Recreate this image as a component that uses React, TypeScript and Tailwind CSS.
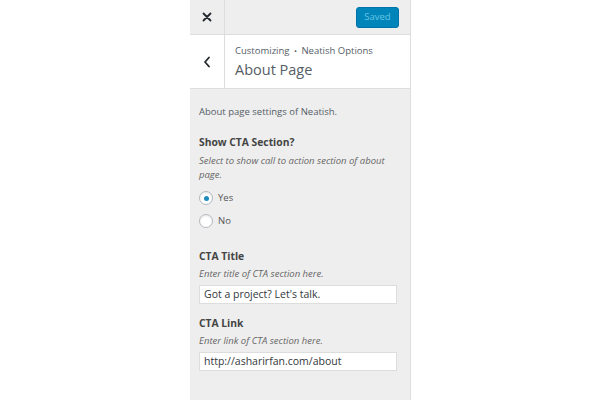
import React from "react";

export default function App() {
  return (
    <div className="w-[600px] h-[400px] bg-white flex pl-[190px] overflow-hidden" style={{ fontFamily: '"Open Sans", sans-serif' }}>
      <div className="w-[221px] h-full bg-[#eeeeee] border-r border-[#dddddd] flex flex-col text-[#555d66]">
        {/* top bar */}
        <div className="h-[35px] flex items-stretch border-b border-[#dddddd] shrink-0">
          <div className="w-[35px] border-r border-[#dddddd] flex items-center justify-center">
            <svg width="10" height="10" viewBox="0 0 10 10">
              <path d="M1.5 1.5 L8.5 8.5 M8.5 1.5 L1.5 8.5" stroke="#23282d" strokeWidth="1.8" strokeLinecap="round" />
            </svg>
          </div>
          <div className="flex-1 flex items-start justify-end pr-[11px] pt-[7px]">
            <div className="h-[21px] w-[43px] rounded-[3px] bg-[#0085ba] border border-[#0073aa] text-[9.5px] text-[#66c6e4] flex items-center justify-center">Saved</div>
          </div>
        </div>
        {/* section header */}
        <div className="h-[54px] bg-white flex items-stretch border-b border-[#dddddd] shrink-0">
          <div className="w-[35px] border-r border-[#dddddd] flex items-center justify-center">
            <svg width="8" height="12" viewBox="0 0 8 12">
              <path d="M6 1.5 L2 6 L6 10.5" fill="none" stroke="#23282d" strokeWidth="1.8" strokeLinecap="round" strokeLinejoin="round" />
            </svg>
          </div>
          <div className="flex-1 pl-[10px] pt-[8px]">
            <div className="text-[9.5px] leading-[16px] text-[#555d66]">Customizing <span className="text-[8px] mx-[2px]">•</span> Neatish Options</div>
            <div className="text-[14.5px] leading-[20px] text-[#555d66] mt-[1px]">About Page</div>
          </div>
        </div>
        {/* content */}
        <div className="px-[9px] pt-[15px]">
          <div className="text-[9.5px] leading-[16px] text-[#555d66]">About page settings of Neatish.</div>
          <div className="mt-[14px] font-bold text-[10.3px] leading-[16px] text-[#444]">Show CTA Section?</div>
          <div className="mt-[4px] italic text-[9.5px] leading-[14px] text-[#666]">Select to show call to action section of about page.</div>
          <div className="mt-[8px] flex items-center gap-[5px] h-[16px]">
            <span className="w-[14px] h-[14px] rounded-full bg-white border border-[#b4b9be] flex items-center justify-center shadow-[inset_0_1px_2px_rgba(0,0,0,0.1)]">
              <span className="w-[5px] h-[5px] rounded-full bg-[#1e8cbe]" />
            </span>
            <span className="text-[9.5px] text-[#555]">Yes</span>
          </div>
          <div className="mt-[7px] flex items-center gap-[5px] h-[16px]">
            <span className="w-[14px] h-[14px] rounded-full bg-white border border-[#b4b9be] shadow-[inset_0_1px_2px_rgba(0,0,0,0.1)]" />
            <span className="text-[9.5px] text-[#555]">No</span>
          </div>
          <div className="mt-[19px] font-bold text-[10.3px] leading-[16px] text-[#444]">CTA Title</div>
          <div className="mt-[3px] italic text-[9.5px] leading-[14px] text-[#666]">Enter title of CTA section here.</div>
          <div className="mt-[4px] h-[19px] w-[198px] bg-white border border-[#dddddd] px-[4px] flex items-center text-[10.5px] text-[#32373c]">Got a project? Let's talk.</div>
          <div className="mt-[11px] font-bold text-[10.3px] leading-[16px] text-[#444]">CTA Link</div>
          <div className="mt-[3px] italic text-[9.5px] leading-[14px] text-[#666]">Enter link of CTA section here.</div>
          <div className="mt-[4px] h-[19px] w-[198px] bg-white border border-[#dddddd] px-[4px] flex items-center text-[10.5px] text-[#32373c]">http://asharirfan.com/about</div>
        </div>
      </div>
    </div>
  );
}
